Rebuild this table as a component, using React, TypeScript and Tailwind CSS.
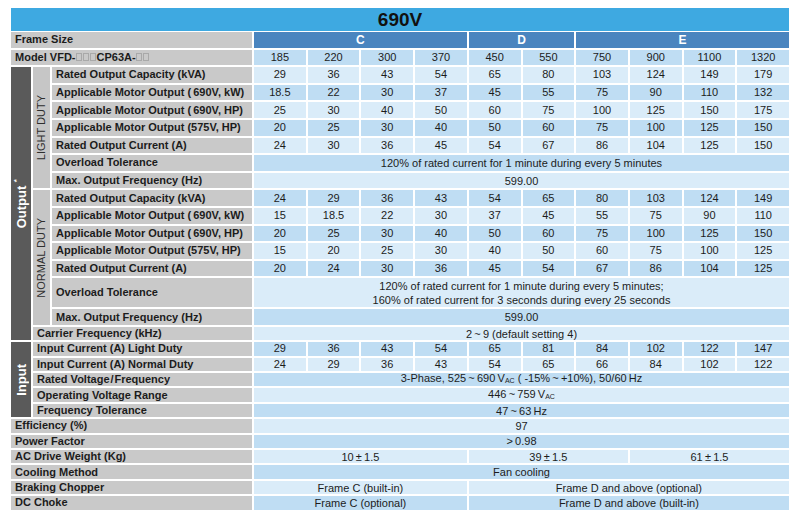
import React from 'react';

const DK = 'bg-[#bfddf3]';
const LT = 'bg-[#daecf9]';

type Tone = 'd' | 'l';

function Lab({ children, span }: { children: React.ReactNode; span: 1 | 2 | 3 }) {
  const cls = span === 3 ? 'col-span-3' : span === 2 ? 'col-span-2' : 'col-span-1';
  return (
    <div className={`${cls} bg-[#c9c9c9] flex items-center pl-[4px] font-bold text-[11px] text-[#1c1c1c] whitespace-nowrap leading-none`}>
      {children}
    </div>
  );
}

function Nums({ values, tone }: { values: string[]; tone: Tone }) {
  return (
    <>
      {values.map((v, i) => (
        <div
          key={i}
          className={`${tone === 'd' ? DK : LT} flex items-center justify-center text-[11px] text-[#1c1c1c] leading-none`}
        >
          {v}
        </div>
      ))}
    </>
  );
}

function Cell({ children, tone, span }: { children: React.ReactNode; tone: Tone; span: 3 | 4 | 6 | 10 }) {
  const cls = span === 10 ? 'col-span-10' : span === 6 ? 'col-span-6' : span === 4 ? 'col-span-4' : 'col-span-3';
  return (
    <div
      className={`${cls} ${tone === 'd' ? DK : LT} flex flex-col items-center justify-center text-[11px] text-[#1c1c1c] leading-[14px] whitespace-nowrap`}
    >
      {children}
    </div>
  );
}

function Box() {
  return <span className="inline-block w-[6px] h-[8px] border border-[#a9a9a9] mx-[0.5px] align-[-1px]" />;
}

function Vac() {
  return <span className="text-[7px] align-[-1px]">AC</span>;
}

export default function App() {
  return (
    <div className="w-[800px] h-[515px] bg-white pt-[8px] px-[11px] font-['Liberation_Sans',Arial,sans-serif] overflow-hidden">
      <div className="w-[778px]">
        <div className="h-[23px] mb-[1px] bg-[#3ea9e1] flex items-center justify-center font-bold text-[19px] text-[#111] leading-none">
          690V
        </div>
        <div className="grid gap-[2px] grid-cols-[20px_17px_200px_repeat(10,minmax(0,1fr))] grid-rows-[repeat(14,15.6px)_29px_15.6px_repeat(12,13.4px)]">
          {/* Frame size */}
          <Lab span={3}>Frame Size</Lab>
          <div className="col-span-4 bg-[#4a85bf] flex items-center justify-center text-white font-bold text-[12px] leading-none">C</div>
          <div className="col-span-2 bg-[#4a85bf] flex items-center justify-center text-white font-bold text-[12px] leading-none">D</div>
          <div className="col-span-4 bg-[#4a85bf] flex items-center justify-center text-white font-bold text-[12px] leading-none">E</div>

          {/* Model */}
          <Lab span={3}>
            Model VFD-
            <Box />
            <Box />
            <Box />
            CP63A-
            <Box />
            <Box />
          </Lab>
          <Nums tone="d" values={['185', '220', '300', '370', '450', '550', '750', '900', '1100', '1320']} />

          {/* Output + Light duty */}
          <div className="row-span-15 bg-[#5a5a5a] flex items-center justify-center">
            <span className="[writing-mode:vertical-rl] rotate-180 text-white font-bold text-[13px] whitespace-nowrap leading-none">
              Output <span className="text-[8px] align-super">*</span>
            </span>
          </div>
          <div className="row-span-7 bg-[#c6c6c6] flex items-center justify-center">
            <span className="[writing-mode:vertical-rl] rotate-180 text-[#2e2e2e] text-[11px] whitespace-nowrap leading-none">
              LIGHT DUTY
            </span>
          </div>
          <Lab span={1}>Rated Output Capacity (kVA)</Lab>
          <Nums tone="l" values={['29', '36', '43', '54', '65', '80', '103', '124', '149', '179']} />
          <Lab span={1}>Applicable Motor Output (&#8201;690V, kW)</Lab>
          <Nums tone="d" values={['18.5', '22', '30', '37', '45', '55', '75', '90', '110', '132']} />
          <Lab span={1}>Applicable Motor Output (&#8201;690V, HP)</Lab>
          <Nums tone="l" values={['25', '30', '40', '50', '60', '75', '100', '125', '150', '175']} />
          <Lab span={1}>Applicable Motor Output (575V, HP)</Lab>
          <Nums tone="d" values={['20', '25', '30', '40', '50', '60', '75', '100', '125', '150']} />
          <Lab span={1}>Rated Output Current (A)</Lab>
          <Nums tone="l" values={['24', '30', '36', '45', '54', '67', '86', '104', '125', '150']} />
          <Lab span={1}>Overload Tolerance</Lab>
          <Cell tone="d" span={10}>120% of rated current for 1 minute during every 5 minutes</Cell>
          <Lab span={1}>Max. Output Frequency (Hz)</Lab>
          <Cell tone="l" span={10}>599.00</Cell>

          {/* Normal duty */}
          <div className="row-span-7 bg-[#c6c6c6] flex items-center justify-center">
            <span className="[writing-mode:vertical-rl] rotate-180 text-[#2e2e2e] text-[11px] whitespace-nowrap leading-none">
              NORMAL DUTY
            </span>
          </div>
          <Lab span={1}>Rated Output Capacity (kVA)</Lab>
          <Nums tone="d" values={['24', '29', '36', '43', '54', '65', '80', '103', '124', '149']} />
          <Lab span={1}>Applicable Motor Output (&#8201;690V, kW)</Lab>
          <Nums tone="l" values={['15', '18.5', '22', '30', '37', '45', '55', '75', '90', '110']} />
          <Lab span={1}>Applicable Motor Output (&#8201;690V, HP)</Lab>
          <Nums tone="d" values={['20', '25', '30', '40', '50', '60', '75', '100', '125', '150']} />
          <Lab span={1}>Applicable Motor Output (575V, HP)</Lab>
          <Nums tone="l" values={['15', '20', '25', '30', '40', '50', '60', '75', '100', '125']} />
          <Lab span={1}>Rated Output Current (A)</Lab>
          <Nums tone="d" values={['20', '24', '30', '36', '45', '54', '67', '86', '104', '125']} />
          <Lab span={1}>Overload Tolerance</Lab>
          <Cell tone="l" span={10}>
            <span>120% of rated current for 1 minute during every 5 minutes;</span>
            <span>160% of rated current for 3 seconds during every 25 seconds</span>
          </Cell>
          <Lab span={1}>Max. Output Frequency (Hz)</Lab>
          <Cell tone="d" span={10}>599.00</Cell>

          {/* Carrier */}
          <Lab span={2}>Carrier Frequency (kHz)</Lab>
          <Cell tone="l" span={10}>2&#8201;~&#8201;9 (default setting 4)</Cell>

          {/* Input */}
          <div className="row-span-5 bg-[#5a5a5a] flex items-center justify-center">
            <span className="[writing-mode:vertical-rl] rotate-180 text-white font-bold text-[13px] whitespace-nowrap leading-none">
              Input
            </span>
          </div>
          <Lab span={2}>Input Current (A) Light Duty</Lab>
          <Nums tone="d" values={['29', '36', '43', '54', '65', '81', '84', '102', '122', '147']} />
          <Lab span={2}>Input Current (A) Normal Duty</Lab>
          <Nums tone="l" values={['24', '29', '36', '43', '54', '65', '66', '84', '102', '122']} />
          <Lab span={2}>Rated Voltage&#8202;/&#8202;Frequency</Lab>
          <Cell tone="d" span={10}>
            <span>
              3-Phase, 525&#8201;~&#8201;690&#8201;V<Vac /> ( -15%&#8201;~&#8201;+10%), 50/60&#8201;Hz
            </span>
          </Cell>
          <Lab span={2}>Operating Voltage Range</Lab>
          <Cell tone="l" span={10}>
            <span>
              446&#8201;~&#8201;759&#8201;V<Vac />
            </span>
          </Cell>
          <Lab span={2}>Frequency Tolerance</Lab>
          <Cell tone="d" span={10}>47&#8201;~&#8201;63&#8201;Hz</Cell>

          {/* Misc */}
          <Lab span={3}>Efficiency (%)</Lab>
          <Cell tone="l" span={10}>97</Cell>
          <Lab span={3}>Power Factor</Lab>
          <Cell tone="d" span={10}>&gt;&#8201;0.98</Cell>
          <Lab span={3}>AC Drive Weight (Kg)</Lab>
          <Cell tone="l" span={4}>10&#8201;±&#8201;1.5</Cell>
          <Cell tone="l" span={3}>39&#8201;±&#8201;1.5</Cell>
          <Cell tone="l" span={3}>61&#8201;±&#8201;1.5</Cell>
          <Lab span={3}>Cooling Method</Lab>
          <Cell tone="d" span={10}>Fan cooling</Cell>
          <Lab span={3}>Braking Chopper</Lab>
          <Cell tone="l" span={4}>Frame C (built-in)</Cell>
          <Cell tone="l" span={6}>Frame D and above (optional)</Cell>
          <Lab span={3}>DC Choke</Lab>
          <Cell tone="d" span={4}>Frame C (optional)</Cell>
          <Cell tone="d" span={6}>Frame D and above (built-in)</Cell>
        </div>
      </div>
    </div>
  );
}
